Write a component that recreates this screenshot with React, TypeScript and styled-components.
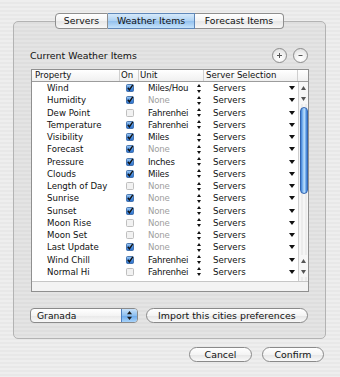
import React from "react";
import styled, { createGlobalStyle } from "styled-components";

const Global = createGlobalStyle`
  html, body { margin: 0; padding: 0; }
  body { font-family: "DejaVu Sans", sans-serif; }
`;

const Window = styled.div`
  width: 340px;
  height: 377px;
  box-sizing: border-box;
  padding: 13px 14px 0 13px;
  background: repeating-linear-gradient(to bottom, #eeeeee 0 2px, #e8e8e8 2px 4px);
  display: flex;
  flex-direction: column;
  font-family: "DejaVu Sans", sans-serif;
  color: #1c1c1c;
`;

const TabsRow = styled.div`
  display: flex;
  justify-content: center;
  height: 16px;
  margin-bottom: -8px;
  position: relative;
  z-index: 1;
`;

const Tab = styled.div<{ $w: number; $active?: boolean; $first?: boolean; $last?: boolean }>`
  width: ${(p) => p.$w}px;
  height: 16px;
  box-sizing: border-box;
  border: 1px solid ${(p) => (p.$active ? "#5f87b8" : "#8e8e8e")};
  border-left-width: ${(p) => (p.$first ? 1 : 0)}px;
  border-radius: ${(p) => (p.$first ? "4px 0 0 4px" : p.$last ? "0 4px 4px 0" : "0")};
  background: ${(p) =>
    p.$active
      ? "linear-gradient(to bottom, #d6e9fa 0%, #aed2f3 48%, #93c1ee 52%, #c6e3fb 100%)"
      : "linear-gradient(to bottom, #ffffff 0%, #f3f3f3 48%, #e6e6e6 52%, #f7f7f7 100%)"};
  font-size: 9.3px;
  line-height: 14px;
  text-align: center;
  color: #111;
`;

const GroupBox = styled.div`
  height: 318px;
  box-sizing: border-box;
  border: 1px solid #b3b3b3;
  border-radius: 5px;
  background: rgba(0, 0, 0, 0.04);
  padding: 25px 17px 0 17px;
  display: flex;
  flex-direction: column;
`;

const TitleRow = styled.div`
  display: flex;
  align-items: center;
  justify-content: space-between;
  height: 16px;
  margin-bottom: 6px;
`;

const Title = styled.div`
  font-size: 9.4px;
  margin-left: -1px;
  color: #111;
`;

const CircleGroup = styled.div`
  display: flex;
  gap: 6px;
`;

const CircleButton = styled.div`
  width: 15px;
  height: 15px;
  box-sizing: border-box;
  border-radius: 50%;
  border: 1px solid #8c8c8c;
  background: radial-gradient(circle at 50% 75%, #ffffff 0%, #f2f2f2 45%, #d9d9d9 100%);
  display: flex;
  align-items: center;
  justify-content: center;
`;

const TableFrame = styled.div`
  height: 223px;
  box-sizing: border-box;
  border: 1px solid #8f8f8f;
  background: #ffffff;
  margin-right: -1px;
  display: flex;
  flex-direction: column;
`;

const cols = "88px 19px 65px 94px";

const HeaderRow = styled.div`
  display: grid;
  grid-template-columns: ${cols} 1fr;
  height: 12px;
  box-sizing: border-box;
  border-bottom: 1px solid #9c9c9c;
  background: linear-gradient(to bottom, #ffffff, #f0f0f0);
`;

const HeaderCell = styled.div<{ $pad: number; $last?: boolean }>`
  font-size: 8.6px;
  line-height: 11px;
  padding-left: ${(p) => p.$pad}px;
  border-right: ${(p) => (p.$last ? "none" : "1px solid #cfcfcf")};
  white-space: nowrap;
  overflow: hidden;
  color: #111;
`;

const Body = styled.div`
  height: 199px;
  display: flex;
`;

const Rows = styled.div`
  flex: 1;
  display: flex;
  flex-direction: column;
`;

const Row = styled.div`
  display: grid;
  grid-template-columns: ${cols};
  height: 12.25px;
  align-items: center;
  font-size: 8.6px;
`;

const PropCell = styled.div`
  padding-left: 15px;
  white-space: nowrap;
  color: #111;
`;

const OnCell = styled.div`
  display: flex;
  justify-content: center;
  align-items: center;
  padding-left: 1px;
`;

const UnitCell = styled.div`
  display: flex;
  align-items: center;
  padding-left: 9px;
  padding-right: 3px;
`;

const UnitText = styled.div<{ $dim: boolean }>`
  flex: 1;
  white-space: nowrap;
  letter-spacing: -0.2px;
  color: ${(p) => (p.$dim ? "#a0a0a0" : "#111")};
`;

const ServerCell = styled.div`
  display: flex;
  align-items: center;
  justify-content: space-between;
  padding-left: 9px;
  padding-right: 3px;
  color: #111;
`;

const Scrollbar = styled.div`
  width: 10px;
  border-left: 1px solid #cdcdcd;
  display: flex;
  flex-direction: column;
  background: repeating-linear-gradient(to right, #f6f6f6 0 2px, #ececec 2px 4px);
`;

const ScrollArrow = styled.div`
  height: 11px;
  display: flex;
  align-items: center;
  justify-content: center;
  background: #f7f7f7;
`;

const Track = styled.div`
  flex: 1;
  padding-top: 3px;
  display: flex;
  justify-content: center;
`;

const Thumb = styled.div`
  width: 8px;
  height: 87px;
  box-sizing: border-box;
  border-radius: 4px;
  border: 1px solid #3566b0;
  background: linear-gradient(to right, #3f80d8 0%, #8cc0f3 35%, #bfe0fc 55%, #6aa6ea 80%, #3a79cf 100%);
`;

const ScrollEnd = styled.div`
  height: 4px;
`;

const Strip = styled.div`
  flex: 1;
  border-top: 1px solid #c6c6c6;
  background: #f3f3f3;
`;

const FooterRow = styled.div`
  display: flex;
  gap: 8px;
  margin-top: 16px;
  margin-left: -1px;
  height: 15px;
`;

const Popup = styled.div`
  width: 108px;
  height: 15px;
  box-sizing: border-box;
  border: 1px solid #8a8a8a;
  border-radius: 4px;
  display: flex;
  overflow: hidden;
  background: linear-gradient(to bottom, #ffffff 0%, #f4f4f4 50%, #e8e8e8 51%, #f8f8f8 100%);
`;

const PopupText = styled.div`
  flex: 1;
  font-size: 9.2px;
  line-height: 13px;
  padding-left: 6px;
  color: #111;
`;

const PopupArrows = styled.div`
  width: 15px;
  border-left: 1px solid #4d7fc0;
  display: flex;
  align-items: center;
  justify-content: center;
  background: linear-gradient(to bottom, #c9e2fa 0%, #8dbff0 50%, #6aa8ea 52%, #a9d4fb 100%);
`;

const PillButton = styled.div<{ $w: number }>`
  width: ${(p) => p.$w}px;
  height: 15px;
  box-sizing: border-box;
  border: 1px solid #8a8a8a;
  border-radius: 8px;
  background: linear-gradient(to bottom, #ffffff 0%, #f4f4f4 50%, #e5e5e5 52%, #f9f9f9 100%);
  font-size: 9.4px;
  line-height: 13px;
  text-align: center;
  color: #111;
  white-space: nowrap;
`;

const BottomRow = styled.div`
  display: flex;
  justify-content: flex-end;
  gap: 10px;
  margin-top: 8px;
  padding-right: 2px;
`;

const Check = ({ on }: { on: boolean }) =>
  on ? (
    <svg width="8" height="8" viewBox="0 0 8 8">
      <defs>
        <linearGradient id="cb" x1="0" y1="0" x2="0" y2="1">
          <stop offset="0" stopColor="#a9d0f6" />
          <stop offset="0.5" stopColor="#4f93e2" />
          <stop offset="1" stopColor="#2c6fcb" />
        </linearGradient>
      </defs>
      <rect x="0.5" y="0.5" width="7" height="7" rx="1" fill="url(#cb)" stroke="#2f5f9e" strokeWidth="0.8" />
      <path d="M1.8 3.8 L3.4 5.8 L6.8 0.8" fill="none" stroke="#111" strokeWidth="1.4" />
    </svg>
  ) : (
    <svg width="8" height="8" viewBox="0 0 8 8">
      <rect x="0.5" y="0.5" width="7" height="7" rx="1" fill="#f2f2f2" stroke="#b0b0b0" strokeWidth="0.8" />
    </svg>
  );

const Stepper = () => (
  <svg width="4" height="9" viewBox="0 0 4 9">
    <path d="M2 0 L4 3 L0 3 Z" fill="#111" />
    <path d="M0 6 L4 6 L2 9 Z" fill="#111" />
  </svg>
);

const DownTri = () => (
  <svg width="6" height="4" viewBox="0 0 6 4">
    <path d="M0 0 L6 0 L3 4 Z" fill="#111" />
  </svg>
);

const SmallTri = ({ up }: { up: boolean }) => (
  <svg width="5" height="4" viewBox="0 0 5 4">
    <path d={up ? "M2.5 0 L5 4 L0 4 Z" : "M0 0 L5 0 L2.5 4 Z"} fill="#555" />
  </svg>
);

const PopupStepper = () => (
  <svg width="5" height="9" viewBox="0 0 5 9">
    <path d="M2.5 0 L5 3.3 L0 3.3 Z" fill="#1a1a1a" />
    <path d="M0 5.7 L5 5.7 L2.5 9 Z" fill="#1a1a1a" />
  </svg>
);

type Item = { name: string; on: boolean; unit: string; dim: boolean };

const items: Item[] = [
  { name: "Wind", on: true, unit: "Miles/Hou", dim: false },
  { name: "Humidity", on: true, unit: "None", dim: true },
  { name: "Dew Point", on: false, unit: "Fahrenhei", dim: false },
  { name: "Temperature", on: true, unit: "Fahrenhei", dim: false },
  { name: "Visibility", on: true, unit: "Miles", dim: false },
  { name: "Forecast", on: true, unit: "None", dim: true },
  { name: "Pressure", on: true, unit: "Inches", dim: false },
  { name: "Clouds", on: true, unit: "Miles", dim: false },
  { name: "Length of Day", on: false, unit: "None", dim: true },
  { name: "Sunrise", on: true, unit: "None", dim: true },
  { name: "Sunset", on: true, unit: "None", dim: true },
  { name: "Moon Rise", on: false, unit: "None", dim: true },
  { name: "Moon Set", on: false, unit: "None", dim: true },
  { name: "Last Update", on: true, unit: "None", dim: true },
  { name: "Wind Chill", on: true, unit: "Fahrenhei", dim: false },
  { name: "Normal Hi", on: false, unit: "Fahrenhei", dim: false },
];

export default function App() {
  return (
    <>
      <Global />
      <Window>
        <TabsRow>
          <Tab $w={53} $first>Servers</Tab>
          <Tab $w={87} $active>Weather Items</Tab>
          <Tab $w={89} $last>Forecast Items</Tab>
        </TabsRow>
        <GroupBox>
          <TitleRow>
            <Title>Current Weather Items</Title>
            <CircleGroup>
              <CircleButton>
                <svg width="7" height="7" viewBox="0 0 7 7">
                  <path d="M3.5 1 V6 M1 3.5 H6" stroke="#555" strokeWidth="1" />
                </svg>
              </CircleButton>
              <CircleButton>
                <svg width="7" height="7" viewBox="0 0 7 7">
                  <path d="M1.5 3.5 H5.5" stroke="#555" strokeWidth="1" />
                </svg>
              </CircleButton>
            </CircleGroup>
          </TitleRow>
          <TableFrame>
            <HeaderRow>
              <HeaderCell $pad={3}>Property</HeaderCell>
              <HeaderCell $pad={1}>On</HeaderCell>
              <HeaderCell $pad={1}>Unit</HeaderCell>
              <HeaderCell $pad={2}>Server Selection</HeaderCell>
              <HeaderCell $pad={0} $last></HeaderCell>
            </HeaderRow>
            <Body>
              <Rows>
                {items.map((it) => (
                  <Row key={it.name}>
                    <PropCell>{it.name}</PropCell>
                    <OnCell>
                      <Check on={it.on} />
                    </OnCell>
                    <UnitCell>
                      <UnitText $dim={it.dim}>{it.unit}</UnitText>
                      <Stepper />
                    </UnitCell>
                    <ServerCell>
                      <span>Servers</span>
                      <DownTri />
                    </ServerCell>
                  </Row>
                ))}
              </Rows>
              <Scrollbar>
                <ScrollArrow>
                  <SmallTri up />
                </ScrollArrow>
                <ScrollArrow>
                  <SmallTri up={false} />
                </ScrollArrow>
                <Track>
                  <Thumb />
                </Track>
                <ScrollArrow>
                  <SmallTri up />
                </ScrollArrow>
                <ScrollArrow>
                  <SmallTri up={false} />
                </ScrollArrow>
                <ScrollEnd />
              </Scrollbar>
            </Body>
            <Strip />
          </TableFrame>
          <FooterRow>
            <Popup>
              <PopupText>Granada</PopupText>
              <PopupArrows>
                <PopupStepper />
              </PopupArrows>
            </Popup>
            <PillButton $w={163}>Import this cities preferences</PillButton>
          </FooterRow>
        </GroupBox>
        <BottomRow>
          <PillButton $w={63}>Cancel</PillButton>
          <PillButton $w={62}>Confirm</PillButton>
        </BottomRow>
      </Window>
    </>
  );
}
